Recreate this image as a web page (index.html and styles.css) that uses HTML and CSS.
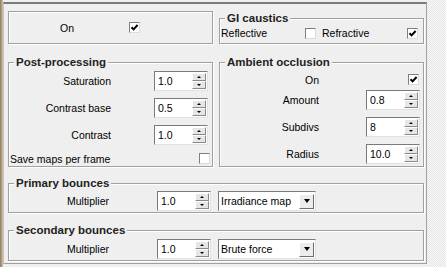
FILE: index.html
```html
<!DOCTYPE html>
<html lang="en">
<head>
    <meta charset="UTF-8">
    <title>Global illumination</title>
    <link rel="stylesheet" href="styles.css">
</head>
<body>
    <div class="edge"></div>
    <div class="rollout">
        <div class="row row-top">
            <div class="box on-box">
                <span class="on-label">On</span>
                <span class="chk"><svg viewBox="0 0 9 9"><path d="M1.5 4.2 L3.6 6.4 L7.6 2"/></svg></span>
            </div>
            <fieldset class="box caustics">
                <legend>GI caustics</legend>
                <div class="caustics-row">
                    <span class="refl">Reflective</span>
                    <span class="chk"></span>
                    <span class="refr">Refractive</span>
                    <span class="chk"><svg viewBox="0 0 9 9"><path d="M1.5 4.2 L3.6 6.4 L7.6 2"/></svg></span>
                </div>
            </fieldset>
        </div>

        <div class="row row-mid">
            <fieldset class="box post">
                <legend>Post-processing</legend>
                <div class="field">
                    <span class="lbl">Saturation</span>
                    <div class="spin"><span class="val">1.0</span><div class="btns"><i class="up"></i><i class="dn"></i></div></div>
                </div>
                <div class="field">
                    <span class="lbl">Contrast base</span>
                    <div class="spin"><span class="val">0.5</span><div class="btns"><i class="up"></i><i class="dn"></i></div></div>
                </div>
                <div class="field">
                    <span class="lbl">Contrast</span>
                    <div class="spin"><span class="val">1.0</span><div class="btns"><i class="up"></i><i class="dn"></i></div></div>
                </div>
                <div class="field save">
                    <span class="save-lbl">Save maps per frame</span>
                    <span class="chk"></span>
                </div>
            </fieldset>

            <fieldset class="box ao">
                <legend>Ambient occlusion</legend>
                <div class="field small">
                    <span class="lbl">On</span>
                    <span class="chk"><svg viewBox="0 0 9 9"><path d="M1.5 4.2 L3.6 6.4 L7.6 2"/></svg></span>
                </div>
                <div class="field">
                    <span class="lbl">Amount</span>
                    <div class="spin"><span class="val">0.8</span><div class="btns"><i class="up"></i><i class="dn"></i></div></div>
                </div>
                <div class="field">
                    <span class="lbl">Subdivs</span>
                    <div class="spin"><span class="val">8</span><div class="btns"><i class="up"></i><i class="dn"></i></div></div>
                </div>
                <div class="field">
                    <span class="lbl">Radius</span>
                    <div class="spin"><span class="val">10.0</span><div class="btns"><i class="up"></i><i class="dn"></i></div></div>
                </div>
            </fieldset>
        </div>

        <fieldset class="box bounce">
            <legend>Primary bounces</legend>
            <div class="field">
                <span class="lbl">Multiplier</span>
                <div class="spin"><span class="val">1.0</span><div class="btns"><i class="up"></i><i class="dn"></i></div></div>
                <div class="combo"><span class="val">Irradiance map</span><i class="arrow"></i></div>
            </div>
        </fieldset>

        <fieldset class="box bounce secondary">
            <legend>Secondary bounces</legend>
            <div class="field">
                <span class="lbl">Multiplier</span>
                <div class="spin"><span class="val">1.0</span><div class="btns"><i class="up"></i><i class="dn"></i></div></div>
                <div class="combo"><span class="val">Brute force</span><i class="arrow"></i></div>
            </div>
        </fieldset>
    </div>
    <div class="dither"></div>
</body>
</html>
```

FILE: styles.css
```css
body {
    margin: 0;
    height: 267px;
    display: flex;
    background-color: #efefef;
    font-family: "Liberation Sans", Arial, sans-serif;
    font-size: 10.5px;
    color: #000;
    overflow: hidden;
}
.edge {
    width: 3px;
    background: linear-gradient(to right, #8f7e5e, #b3a383 60%, #d6cdbb);
}
.rollout {
    box-sizing: border-box;
    width: 424px;
    height: 262px;
    margin-top: 2px;
    padding: 0 2px 0 4px;
    border-top: 2px solid #7b7b7b;
    border-left: 1px solid #c4c4c4;
    border-right: 1px solid #a0a0a0;
    border-bottom: 1px solid #a0a0a0;
}
.dither {
    flex: 1;
    background: repeating-conic-gradient(#e3e3e3 0 25%, #fbfbfb 0 50%) 0 0 / 2px 2px;
}

/* etched group boxes */
.box {
    box-sizing: border-box;
    margin: 0;
    padding: 0;
    min-width: 0;
    border: 1px solid #a0a0a0;
    box-shadow: inset 1px 1px 0 #fff, 1px 1px 0 #fff;
}
.box legend {
    margin-left: 5px;
    padding: 0 2px;
    font-size: 11.5px;
    font-weight: bold;
    line-height: 14px;
    color: #222;
    background-color: #efefef;
}
.row {
    display: flex;
    gap: 6px;
}
.row > .box {
    width: 205px;
}
.row-top {
    margin-top: 7px;
}
.row-mid {
    margin-top: 11px;
}

.on-box {
    height: 33px;
    display: flex;
    align-items: center;
    padding-left: 51px;
}
.on-label {
    width: 69px;
}
.caustics-row {
    display: flex;
    align-items: center;
    padding: 2px 0 3px 1px;
}
.refl {
    width: 84px;
}
.refr {
    width: 85px;
    margin-left: 6px;
}

/* checkbox */
.chk {
    box-sizing: border-box;
    display: inline-block;
    width: 11px;
    height: 11px;
    background-color: #fff;
    border: 1px solid;
    border-color: #7f7f7f #dcdcdc #dcdcdc #7f7f7f;
}
.chk svg {
    display: block;
    width: 9px;
    height: 9px;
}
.chk path {
    fill: none;
    stroke: #000;
    stroke-width: 2;
}

/* label + control rows */
.field {
    display: flex;
    align-items: center;
    height: 20px;
}
.lbl {
    text-align: right;
}
.post {
    padding: 2px 0 1px 0;
}
.post .lbl {
    width: 102px;
}
.post .spin {
    margin-left: 43px;
}
.post .field + .field {
    margin-top: 7px;
}
.post .save {
    height: 13px;
    margin-top: 8px;
    padding-left: 1px;
}
.save-lbl {
    flex: 1;
}
.post .save .chk {
    margin-right: 2px;
}

.ao {
    padding: 4px 0 2px 0;
}
.ao .lbl {
    width: 99px;
}
.ao .spin {
    margin-left: 47px;
}
.ao .small {
    height: 13px;
}
.ao .small .chk {
    margin-left: 89px;
}
.ao .field + .field {
    margin-top: 7px;
}
.ao .small + .field {
    margin-top: 4px;
}

.bounce {
    margin-top: 9px;
    padding: 1px 0;
}
.bounce.secondary {
    margin-top: 10px;
    padding: 2px 0 1px;
}
.bounce .lbl {
    width: 100px;
}
.bounce .spin {
    margin-left: 48px;
}

/* spinner */
.spin {
    box-sizing: border-box;
    width: 54px;
    height: 20px;
    display: flex;
    align-items: center;
    background-color: #fff;
    border: 1px solid;
    border-color: #7a7a7a #e2e2e2 #e2e2e2 #7a7a7a;
}
.val {
    flex: 1;
    padding-left: 3px;
    white-space: nowrap;
}
.btns {
    width: 14px;
    height: 16px;
    margin-right: 1px;
    display: flex;
    flex-direction: column;
}
.btns i {
    box-sizing: border-box;
    flex: 1;
    display: flex;
    justify-content: center;
    align-items: center;
    background-color: #e6e6e6;
    border: 1px solid;
    border-color: #fff #8a8a8a #8a8a8a #fff;
}
.btns i::after {
    content: "";
    border-left: 2px solid transparent;
    border-right: 2px solid transparent;
}
.btns .up::after {
    border-bottom: 2px solid #000;
}
.btns .dn::after {
    border-top: 2px solid #000;
}

/* drop-down */
.combo {
    box-sizing: border-box;
    width: 98px;
    height: 20px;
    margin-left: 7px;
    display: flex;
    align-items: center;
    background-color: #fff;
    border: 1px solid;
    border-color: #7a7a7a #e2e2e2 #e2e2e2 #7a7a7a;
}
.combo .val {
    padding-left: 2px;
}
.arrow {
    box-sizing: border-box;
    width: 15px;
    height: 15px;
    margin-right: 1px;
    display: flex;
    justify-content: center;
    align-items: center;
    background-color: #ececec;
    border: 1px solid;
    border-color: #fff #6e6e6e #6e6e6e #fff;
}
.arrow::after {
    content: "";
    border-left: 3.5px solid transparent;
    border-right: 3.5px solid transparent;
    border-top: 4px solid #000;
}
```
